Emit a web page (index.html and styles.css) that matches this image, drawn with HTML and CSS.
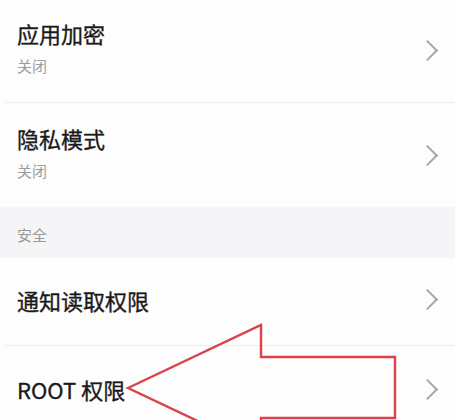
FILE: index.html
```html
<!DOCTYPE html>
<html lang="zh">
<head>
<meta charset="utf-8">
<link rel="stylesheet" href="styles.css">
</head>
<body>
<div class="page">
  <div class="row two">
    <div class="text">
      <div class="title">应用加密</div>
      <div class="sub">关闭</div>
    </div>
    <span class="chev"></span>
  </div>
  <div class="divider"></div>
  <div class="row two">
    <div class="text">
      <div class="title">隐私模式</div>
      <div class="sub">关闭</div>
    </div>
    <span class="chev"></span>
  </div>
  <div class="section">安全</div>
  <div class="row one">
    <div class="text">
      <div class="title">通知读取权限</div>
    </div>
    <span class="chev"></span>
  </div>
  <div class="divider"></div>
  <div class="row one last">
    <div class="text">
      <div class="title">ROOT 权限</div>
    </div>
    <span class="chev"></span>
  </div>
  <svg class="arrow" width="455" height="460" viewBox="0 0 455 460">
    <polygon points="128,388 261,325 261,357 395,357 395,418 261,418 261,451" fill="none" stroke="#d8434c" stroke-width="2.4" stroke-linejoin="miter"/>
  </svg>
</div>
</body>
</html>
```

FILE: styles.css
```css
html, body {
  margin: 0;
  padding: 0;
  background: #fdfdfd;
}
body {
  width: 455px;
  height: 420px;
  overflow: hidden;
  font-family: "Noto Sans CJK SC", "Noto Sans", Roboto, sans-serif;
}
.page {
  position: relative;
  margin-top: -2px;
}
.row {
  display: flex;
  align-items: center;
  padding: 0 17px;
  box-sizing: border-box;
}
.row.two {
  height: 104px;
}
.row.two .text {
  margin-bottom: 5px;
}
.row.two .chev {
  margin-bottom: 0;
}
.row.one {
  height: 87px;
  padding-bottom: 4px;
}
.row.last {
  height: 90px;
}
.text {
  flex: 1;
  display: flex;
  flex-direction: column;
}
.title {
  font-size: 22px;
  line-height: 28px;
  color: #1a1a1a;
  font-weight: 400;
  -webkit-text-stroke: 0.35px #1a1a1a;
}
.sub {
  font-size: 15px;
  line-height: 20px;
  color: #9c9c9c;
  margin-top: 9px;
}
.chev {
  width: 13px;
  height: 13px;
  border-top: 2px solid #a6a6a6;
  border-right: 2px solid #a6a6a6;
  transform: rotate(45deg);
  margin-right: 3px;
}
.divider {
  height: 1px;
  background: #ececec;
  margin-left: 5px;
}
.section {
  height: 51px;
  background: #f5f5f7;
  color: #999;
  font-size: 15px;
  line-height: 20px;
  padding: 18px 17px 0;
  box-sizing: border-box;
}
.arrow {
  position: absolute;
  left: 0;
  top: 2px;
  pointer-events: none;
}
```
